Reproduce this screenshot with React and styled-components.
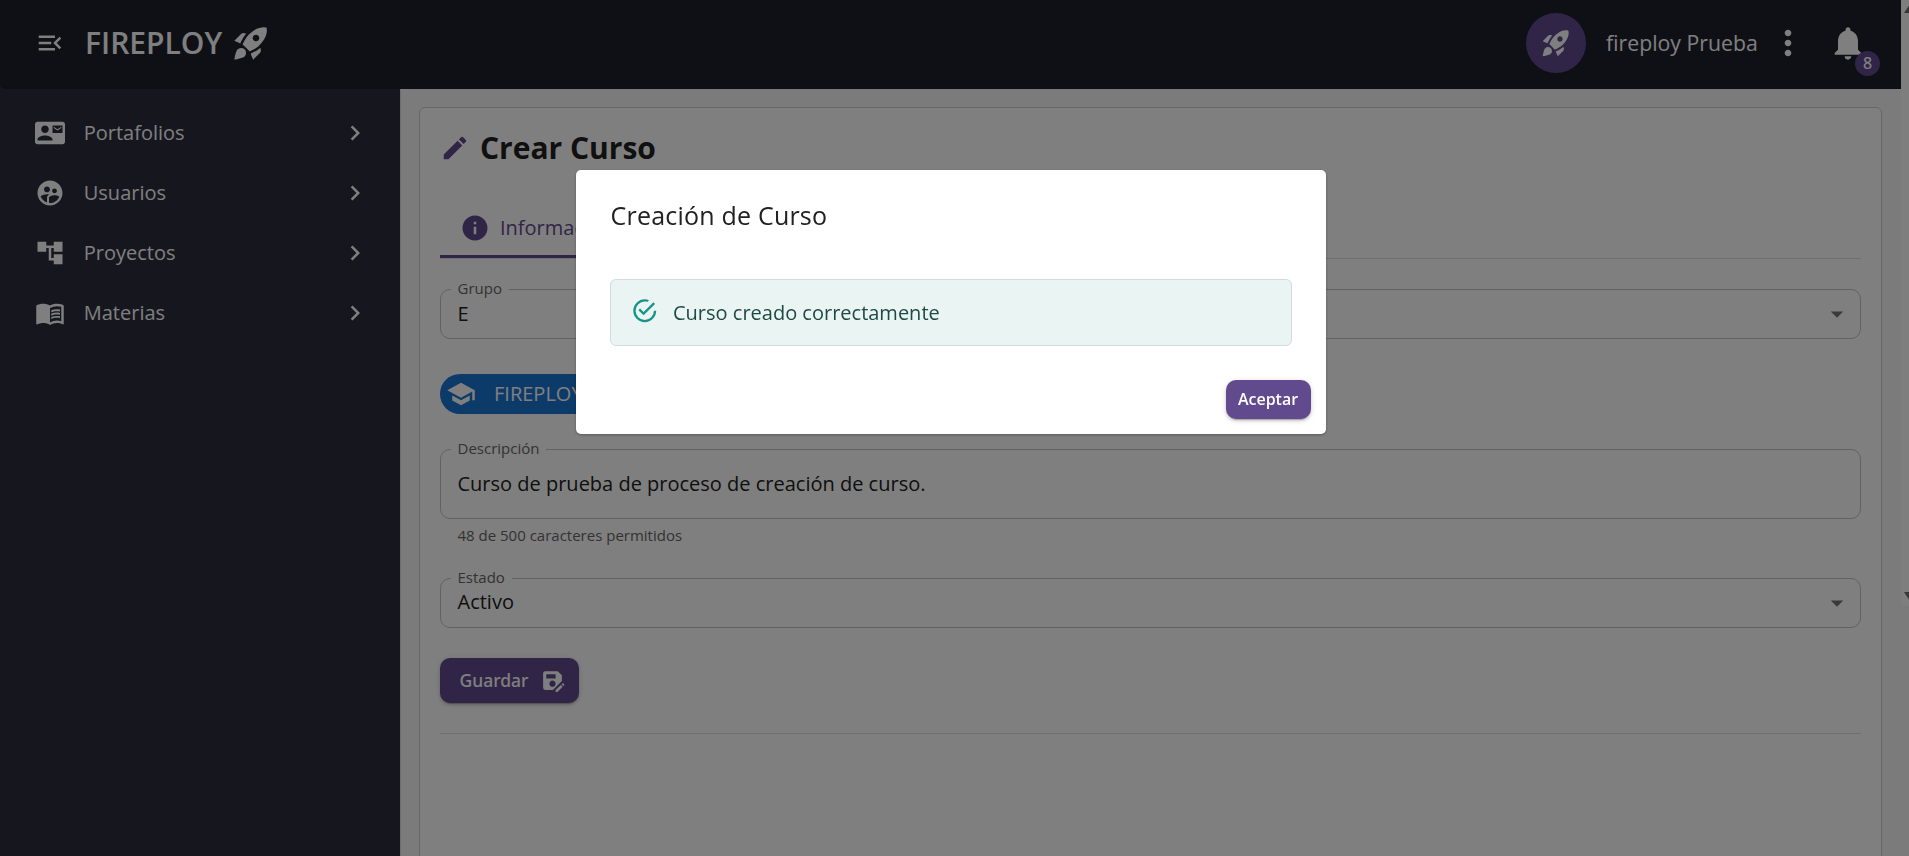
import React from "react";
import styled, { createGlobalStyle } from "styled-components";
import {
  MdMenuOpen, MdRocketLaunch, MdContactMail, MdSupervisedUserCircle, MdAccountTree,
  MdMenuBook, MdChevronRight, MdMoreVert, MdNotifications, MdEdit, MdInfo,
  MdArrowDropDown, MdSchool, MdSaveAs,
} from "react-icons/md";

const purple = "#624a8f";
const mediumFont = `"Noto Sans", "Open Sans", sans-serif`;

const GlobalStyle = createGlobalStyle`
  *, *::before, *::after { box-sizing: border-box; }
  html, body { margin: 0; height: 100%; overflow: hidden; }
  body {
    font-family: "Open Sans", "Noto Sans", sans-serif;
    font-size: 20px;
    line-height: 30px;
    color: #212121;
    background: #f6f6f6;
  }
  svg { display: block; flex-shrink: 0; }
  button { border: 0; cursor: pointer; }
  h1, h2, p { margin: 0; }
`;

const Screen = styled.div`
  display: flex;
  height: 856px;
  overflow: hidden;
`;

const Page = styled.div`
  flex: 1;
  min-width: 0;
  display: flex;
  flex-direction: column;
  background: #2c2c3d;
`;

const Header = styled.header`
  height: 89px;
  flex-shrink: 0;
  display: flex;
  align-items: center;
  padding: 0 33px 3px 35px;
  color: #fff;
  background: #1e1e2d;
  border-radius: 0 0 0 5px;
`;

const Brand = styled.div`
  display: flex;
  align-items: center;
  gap: 9px;
  margin-left: 20px;
  font-size: 30px;
  font-weight: 600;
  line-height: 40px;
`;

const Spacer = styled.div`
  flex: 1;
`;

const Avatar = styled.div`
  width: 60px;
  height: 60px;
  border-radius: 50%;
  display: grid;
  place-items: center;
  background: ${purple};
`;

const UserName = styled.span`
  width: 152px;
  margin: 0 10px 0 20px;
  font-size: 21.25px;
  white-space: nowrap;
`;

const Bell = styled.div`
  position: relative;
  margin-left: 20px;
`;

const Badge = styled.span`
  position: absolute;
  left: 27px;
  top: 28px;
  width: 25px;
  height: 25px;
  border-radius: 50%;
  background: ${purple};
  font-family: ${mediumFont};
  font-size: 16px;
  font-weight: 500;
  line-height: 25px;
  text-align: center;
`;

const Body = styled.div`
  flex: 1;
  min-height: 0;
  display: flex;
`;

const Sidebar = styled.nav`
  width: 400px;
  flex-shrink: 0;
  padding-top: 14px;
  color: #fff;
`;

const NavItem = styled.div`
  height: 60px;
  display: flex;
  align-items: center;
  padding: 0 30px 0 35px;
`;

const NavLabel = styled.span`
  flex: 1;
  margin-left: 18.75px;
  color: #fff;
`;

const Main = styled.main`
  flex: 1;
  min-width: 0;
  padding: 18px 19px 0 18px;
  background: #f6f6f6;
  border-left: 1px solid #dcdcdc;
`;

const Card = styled.section`
  height: 900px;
  padding: 20px 20px 0;
  background: #fff;
  border: 1px solid #cfcfcf;
  border-radius: 6px;
`;

const CardTitle = styled.div`
  display: flex;
  align-items: center;
  gap: 10px;
  height: 40px;
  color: ${purple};
  h1 {
    font-size: 30px;
    font-weight: 700;
    line-height: 40px;
    color: #212121;
  }
`;

const Tabs = styled.div`
  display: flex;
  height: 61px;
  margin-top: 30px;
  border-bottom: 1px solid #dedede;
`;

const Tab = styled.div`
  display: flex;
  align-items: center;
  gap: 10px;
  height: 60px;
  padding: 3px 20px 0;
  color: ${purple};
  border-bottom: 3px solid ${purple};
`;

const Field = styled.fieldset`
  display: flex;
  align-items: center;
  min-width: 0;
  height: ${(p) => p.$height}px;
  margin: ${(p) => p.$top}px 0 0;
  padding: 0 8px 0 10px;
  border: 1px solid #c4c4c4;
  border-radius: 10px;
  > svg { margin-top: -10px; }
`;

const FieldLabel = styled.legend`
  height: 22px;
  padding: 0 7px 0 6.5px;
  font-size: 15px;
  line-height: 20px;
  color: #666;
`;

const FieldValue = styled.span`
  flex: 1;
  padding-left: 6.5px;
  margin-top: ${(p) => p.$shift}px;
`;

const Chip = styled.div`
  display: inline-flex;
  align-items: center;
  gap: 18px;
  width: 190px;
  height: 40px;
  margin-top: 35px;
  padding-left: 6px;
  border-radius: 20px;
  color: #fff;
  background: #1976d2;
  vertical-align: top;
`;

const HelperText = styled.p`
  margin: 4px 0 0 17.5px;
  font-size: 15px;
  line-height: 25px;
  color: #666;
`;

const Button = styled.button`
  display: flex;
  align-items: center;
  justify-content: center;
  gap: 11px;
  width: ${(p) => p.$width}px;
  height: ${(p) => p.$height}px;
  padding: 0;
  border-radius: 10px;
  color: #fff;
  background: ${purple};
  font-family: ${mediumFont};
  font-size: ${(p) => p.$size}px;
  font-weight: 500;
  box-shadow: 0 4px 1px -3px rgba(0, 0, 0, 0.2), 0 2px 3px rgba(0, 0, 0, 0.14), 0 1px 6px rgba(0, 0, 0, 0.12);
`;

const SaveButton = styled(Button)`
  padding: 0 0 1px 5px;
  svg { margin-top: 1px; }
`;

const AcceptButton = styled(Button)`
  padding: 0 1px 1px 0;
  font-family: "Open Sans", "Noto Sans", sans-serif;
  font-weight: 600;
`;

const SaveRow = styled.div`
  padding: 30px 0;
  border-bottom: 1px solid #dedede;
`;

const ScrollTrack = styled.div`
  width: 8px;
  height: 606px;
  display: flex;
  flex-direction: column;
  justify-content: space-between;
  padding: 4px 0 5px 3px;
  background: #fcfcfc;
  overflow: hidden;
`;

const Backdrop = styled.div`
  position: fixed;
  inset: 0;
  display: flex;
  justify-content: center;
  align-items: flex-start;
  padding: 170px 7px 0 0;
  background: rgba(0, 0, 0, 0.5);
`;

const Dialog = styled.div`
  width: 750px;
  height: 264px;
  display: flex;
  flex-direction: column;
  padding: 25px 15px 15px 34px;
  background: #fff;
  border-radius: 5px;
  box-shadow: 0 1px 3px rgba(0, 0, 0, 0.3);
  h2 {
    padding-left: 0.5px;
    font-size: 25px;
    font-weight: 400;
    letter-spacing: 0.0085em;
    line-height: 40px;
  }
`;

const Alert = styled.div`
  display: flex;
  align-items: center;
  gap: 14.5px;
  width: 682px;
  height: 67px;
  margin-top: 44px;
  padding-left: 20px;
  color: #1e4a45;
  background: #eaf4f3;
  border: 1px solid #d3dcdb;
  border-radius: 6px;
  svg { margin-top: -3px; }
`;

const DialogActions = styled.div`
  display: flex;
  justify-content: flex-end;
  margin-top: auto;
`;

const CheckIcon = () => (
  <svg width="27.5" height="27.5" viewBox="0 0 24 24" fill="#159588">
    <path d="M20,12A8,8 0 0,1 12,20A8,8 0 0,1 4,12A8,8 0 0,1 12,4C12.76,4 13.5,4.11 14.2,4.31L15.77,2.74C14.61,2.26 13.34,2 12,2A10,10 0 0,0 2,12A10,10 0 0,0 12,22A10,10 0 0,0 22,12M7.91,10.08L6.5,11.5L11,16L21,6L19.59,4.58L11,13.17L7.91,10.08Z" />
  </svg>
);

const ScrollArrow = ({ down }) => (
  <svg width="12" height="10" viewBox="0 0 12 10" fill="#707070">
    <path d={down ? "M0 1H12L6 10Z" : "M6 0L12 9H0Z"} />
  </svg>
);

const sections = [
  ["Portafolios", MdContactMail],
  ["Usuarios", MdSupervisedUserCircle],
  ["Proyectos", MdAccountTree],
  ["Materias", MdMenuBook],
];

export default function App() {
  return (
    <>
      <GlobalStyle />
      <Screen>
        <Page>
          <Header>
            <MdMenuOpen size={30} />
            <Brand>
              FIREPLOY
              <MdRocketLaunch size={40} />
            </Brand>
            <Spacer />
            <Avatar><MdRocketLaunch size={32} /></Avatar>
            <UserName>fireploy Prueba</UserName>
            <MdMoreVert size={40} />
            <Bell>
              <MdNotifications size={40} />
              <Badge>8</Badge>
            </Bell>
          </Header>
          <Body>
            <Sidebar>
              {sections.map(([label, Icon]) => (
                <NavItem key={label}>
                  <Icon size={30} />
                  <NavLabel>{label}</NavLabel>
                  <MdChevronRight size={30} />
                </NavItem>
              ))}
            </Sidebar>
            <Main>
              <Card>
                <CardTitle>
                  <MdEdit size={30} />
                  <h1>Crear Curso</h1>
                </CardTitle>
                <Tabs>
                  <Tab><MdInfo size={30} />Información</Tab>
                </Tabs>
                <Field $height={61} $top={19}>
                  <FieldLabel>Grupo</FieldLabel>
                  <FieldValue $shift={-10}>E</FieldValue>
                  <MdArrowDropDown size={30} color="#757575" />
                </Field>
                <Chip><MdSchool size={30} />FIREPLOY</Chip>
                <Field $height={81} $top={24}>
                  <FieldLabel>Descripción</FieldLabel>
                  <FieldValue $shift={-10}>Curso de prueba de proceso de creación de curso.</FieldValue>
                </Field>
                <HelperText>48 de 500 caracteres permitidos</HelperText>
                <Field $height={61} $top={19}>
                  <FieldLabel>Estado</FieldLabel>
                  <FieldValue $shift={-12}>Activo</FieldValue>
                  <MdArrowDropDown size={30} color="#757575" />
                </Field>
                <SaveRow>
                  <SaveButton $width={139} $height={45} $size={17.5}>
                    Guardar
                    <MdSaveAs size={25} />
                  </SaveButton>
                </SaveRow>
              </Card>
            </Main>
          </Body>
        </Page>
        <ScrollTrack>
          <ScrollArrow />
          <ScrollArrow down />
        </ScrollTrack>
      </Screen>
      <Backdrop>
        <Dialog role="dialog">
          <h2>Creación de Curso</h2>
          <Alert><CheckIcon />Curso creado correctamente</Alert>
          <DialogActions>
            <AcceptButton $width={85} $height={39} $size={16}>Aceptar</AcceptButton>
          </DialogActions>
        </Dialog>
      </Backdrop>
    </>
  );
}
